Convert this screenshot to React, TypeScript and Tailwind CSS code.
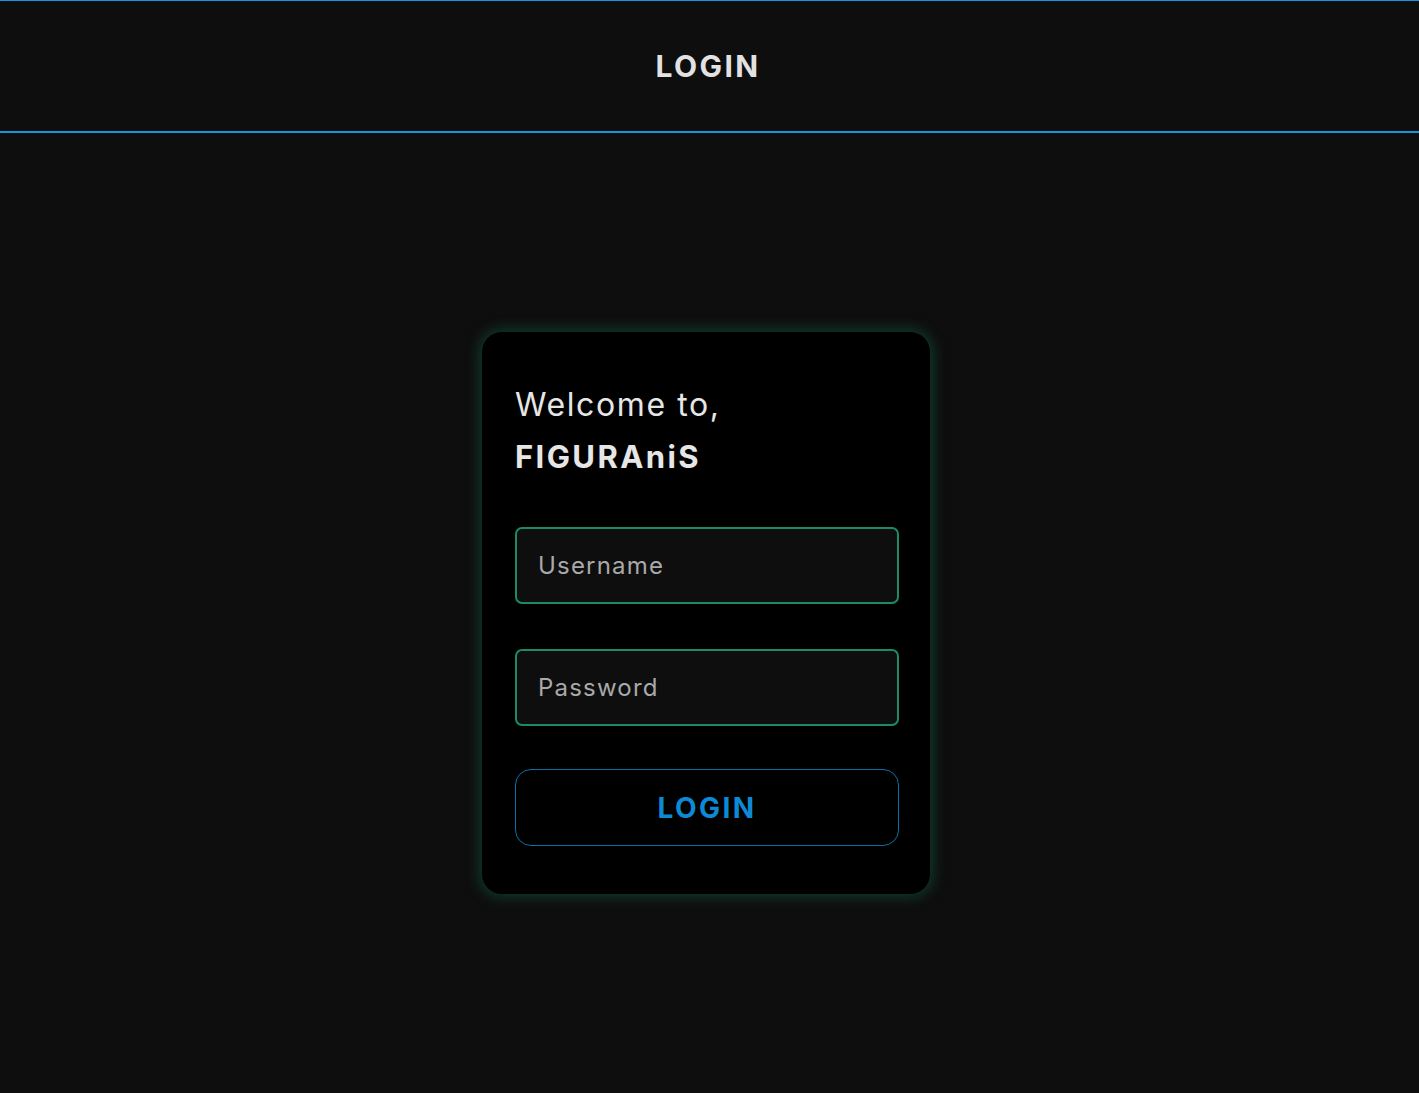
import React from "react";

export default function App() {
  return (
    <div className="min-h-[1093px] bg-[#0e0e0e] text-[#e0e0e0]" style={{ fontFamily: "Inter, 'Noto Sans', sans-serif" }}>
      <header className="h-[133px] border-t border-b-2 border-[#1895da] flex items-center justify-center pr-[3px]">
        <h1 className="text-[30px] font-bold tracking-[2.4px] text-[#e2e2e2]">LOGIN</h1>
      </header>
      <main className="flex justify-center pt-[199px] pr-[7px]">
        <div className="w-[448px] h-[562px] bg-black rounded-[20px] px-[33px] pt-[47px] shadow-[0_0_14px_3px_rgba(20,110,80,0.45)]">
          <p className="text-[32px] leading-[52px] tracking-[1.6px] text-[#e6e6e6]">Welcome to,</p>
          <p className="text-[31px] leading-[52px] font-bold tracking-[2.4px] text-[#e6e6e6]">FIGURAniS</p>
          <div className="mt-[44px] flex flex-col gap-[45px]">
            <input
              placeholder="Username"
              className="w-[384px] h-[77px] bg-[#0e0e0e] border-2 border-[#1c8a62] rounded-[7px] px-[21px] text-[24px] tracking-[1.2px] text-[#bbbbbb] placeholder:text-[#a9a9a9] outline-none"
            />
            <input
              placeholder="Password"
              type="text"
              className="w-[384px] h-[77px] bg-[#0e0e0e] border-2 border-[#1c8a62] rounded-[7px] px-[21px] text-[24px] tracking-[1.2px] text-[#bbbbbb] placeholder:text-[#a9a9a9] outline-none"
            />
          </div>
          <button className="mt-[43px] w-[384px] h-[77px] border-[1.5px] border-[#0b6ea8] rounded-[16px] bg-black text-[28px] font-bold tracking-[2.4px] text-[#0c8ad6]">
            LOGIN
          </button>
        </div>
      </main>
    </div>
  );
}
